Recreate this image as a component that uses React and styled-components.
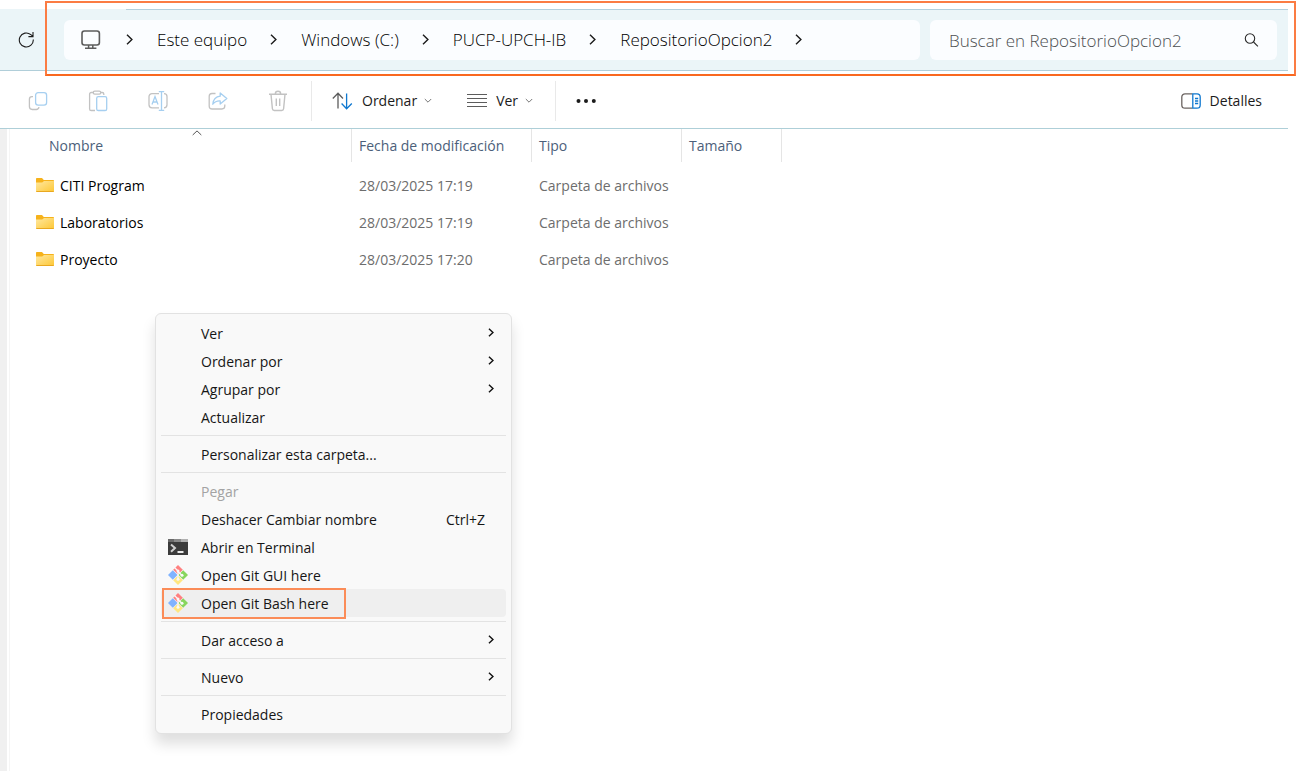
import React from "react";
import styled, { createGlobalStyle } from "styled-components";

const GlobalStyle = createGlobalStyle`
  *, *::before, *::after { box-sizing: border-box; }
  body {
    margin: 0;
    background: #fff;
    color: #1b1b1b;
    font-family: "Open Sans", "Noto Sans", sans-serif;
    font-size: 14px;
    line-height: 20px;
  }
  button, input { font: inherit; color: inherit; }
  button { border: 0; padding: 0; background: none; }
  ul, ol { list-style: none; margin: 0; padding: 0; }
  svg { display: block; flex: none; }
`;

const Window = styled.div`
  position: relative;
  display: flex;
  flex-direction: column;
  min-height: 100vh;
  padding: 9px 8px 0 0;
`;

const AddressBar = styled.header`
  display: flex;
  align-items: center;
  gap: 10px;
  height: 62px;
  padding: 0 11px 0 18px;
  background: linear-gradient(#b4d0dc, #b4d0dc) 126px 0 / 100% 1px no-repeat #ebf5f8;
  border-bottom: 1px solid #b0ced9;
`;

const RefreshButton = styled.button`
  margin-right: 19px;
`;

const Crumbs = styled.nav`
  flex: 1;
  height: 40px;
  padding: 0 16px;
  border-radius: 6px;
  background: #fbfdff;

  ol {
    display: flex;
    align-items: center;
    height: 100%;
  }
  li {
    display: flex;
    align-items: center;
  }
`;

const CrumbLink = styled.a`
  padding: 1px 23px 0 24px;
  color: #000;
  font-size: 17px;
  font-weight: 300;
  line-height: 24px;
  text-decoration: none;
  white-space: nowrap;
`;

const DeviceLink = styled.a`
  margin-right: 24px;
`;

const SearchBox = styled.label`
  display: flex;
  align-items: center;
  flex: 0 1 347px;
  height: 40px;
  padding: 0 18px 0 19px;
  border-radius: 6px;
  background: #fbfdff;
`;

const SearchInput = styled.input`
  flex: 1;
  min-width: 0;
  padding: 2px 0 0;
  border: 0;
  outline: 0;
  background: transparent;
  font-size: 17px;
  font-weight: 300;
  line-height: 24px;
  &::placeholder { color: #4c4f51; opacity: 1; }
`;

const AddressFrame = styled.div`
  position: absolute;
  top: 1px;
  right: 0;
  left: 45px;
  height: 75px;
  border: 2px solid #fb7c43;
  border-bottom-color: #f9681f;
  pointer-events: none;
`;

const Toolbar = styled.div`
  display: flex;
  align-items: center;
  height: 58px;
  padding: 3px 16px 0 8px;
  border-bottom: 1px solid #aecfd8;
`;

const IconButton = styled.button`
  display: flex;
  align-items: center;
  justify-content: center;
  width: 60px;
  height: 40px;
`;

const TextButton = styled.button`
  display: flex;
  align-items: center;
  gap: 7px;
  height: 40px;
  padding: 0 10px;
  margin-left: ${(p) => p.$space || 0}px;

  svg:first-child { margin-right: 2px; }
`;

const Divider = styled.span`
  width: 1px;
  height: 40px;
  margin-left: ${(p) => p.$space}px;
  background: #e9e9e9;
`;

const Spacer = styled.span`
  flex: 1;
`;

const Content = styled.main`
  position: relative;
  display: flex;
  flex: 1;
`;

const PaneEdge = styled.div`
  width: 10px;
  border-left: 7px solid #f0f0f0;
  border-right: 1px solid #f5f5f5;
`;

const FileTable = styled.table`
  align-self: flex-start;
  width: 772px;
  border-collapse: separate;
  border-spacing: 0;
  table-layout: fixed;

  tbody::before {
    content: "";
    display: block;
    height: 5px;
  }
`;

const HeadCell = styled.th`
  position: relative;
  width: ${(p) => p.$width}px;
  height: 33px;
  padding: 0 7px;
  padding-left: ${(p) => (p.$first ? 39 : 7)}px;
  border-right: 1px solid #e5e5e5;
  color: #4c607a;
  font-weight: 400;
  text-align: left;

  svg {
    position: absolute;
    top: 1px;
    right: 149px;
  }
`;

const Cell = styled.td`
  height: 37px;
  padding: 0 7px;
  color: #6d6d6d;
  white-space: nowrap;
`;

const NameCell = styled(Cell)`
  padding-left: 26px;
  color: #000;

  div {
    display: flex;
    align-items: center;
    gap: 6px;
  }
`;

const Menu = styled.ul`
  position: absolute;
  top: 184px;
  left: 155px;
  width: 357px;
  padding: 5px;
  border: 1px solid #e2e2e2;
  border-radius: 6px;
  background: #f9f9f9;
  box-shadow: 0 10px 14px rgba(0, 0, 0, 0.13);
`;

const MenuSeparator = styled.li`
  height: 1px;
  margin: 4px 0;
  background: #e3e3e3;
`;

const MenuButton = styled.button`
  position: relative;
  display: grid;
  grid-template-columns: 20px 1fr auto;
  align-items: center;
  column-gap: 13px;
  width: 100%;
  height: 28px;
  padding: 0 12px 0 7px;
  border-radius: 4px;
  background: ${(p) => (p.$hover ? "#efefef" : "transparent")};
  color: ${(p) => (p.disabled ? "#a3a3a3" : "#161616")};
  text-align: left;

  > svg { margin-bottom: 2px; }
`;

const MenuLabel = styled.span`
  padding-top: 2px;
`;

const Shortcut = styled(MenuLabel)`
  margin-right: 9px;
`;

const ItemFrame = styled.span`
  position: absolute;
  top: -1px;
  left: 1px;
  width: 184px;
  height: 31px;
  border: 2px solid #fb8c58;
`;

const Chevron = ({ size = 11, color = "#1b1b1b", width = 1.4 }) => (
  <svg width={size === 11 ? 7 : 6} height={size} viewBox="0 0 7 11" fill="none" stroke={color} strokeWidth={width}>
    <path d="M1 .8 5.9 5.5 1 10.2" />
  </svg>
);

const ChevronDown = () => (
  <svg width="8" height="6" viewBox="0 0 8 6" fill="none" stroke="#777">
    <path d="M.8 1 4 4.2 7.2 1" />
  </svg>
);

const RefreshIcon = () => (
  <svg width="17" height="17" viewBox="0 0 17 17" fill="none" stroke="#1b1b1b" strokeWidth="1.1">
    <path d="M15.3 8.5A7 7 0 1 1 12.8 3.600L15 5.400M15 1v4.600h-4.600" />
  </svg>
);

const MonitorIcon = () => (
  <svg width="22" height="20" viewBox="0 0 22 20" fill="none" stroke="#5c5c5c" strokeWidth="1.6">
    <rect x="2" y="1" width="17.4" height="14" rx="2.4" />
    <path d="M8.6 15v3M12.8 15v3M5 18.200h11.4" strokeWidth="1.5" />
  </svg>
);

const SearchIcon = () => (
  <svg width="15" height="15" viewBox="0 0 15 15" fill="none" stroke="#2a2a2a" strokeWidth="1.1">
    <circle cx="6" cy="6.500" r="4.700" />
    <path d="m9.500 10 4.400 4.400" />
  </svg>
);

const GRAY = "#c2c2c2";
const BLUE = "#a6cff0";

const CopyIcon = () => (
  <svg width="20" height="20" viewBox="0 0 20 20" fill="none" strokeWidth="1.3">
    <path d="M5 5.6H4A2.6 2.6 0 0 0 1.4 8.200v7.400A2.900 2.900 0 0 0 4.300 18.500h4A2.800 2.800 0 0 0 11 16.200" stroke={GRAY} />
    <rect x="7.600" y="1.600" width="11" height="12.600" rx="2.600" stroke={BLUE} />
  </svg>
);

const PasteIcon = () => (
  <svg width="20" height="22" viewBox="0 0 20 22" fill="none" strokeWidth="1.3">
    <path d="M5.500 2.500H3.200A1.600 1.600 0 0 0 1.600 4.100v14.800a1.600 1.600 0 0 0 1.600 1.600H7M12.500 2.500h1.700A1.600 1.600 0 0 1 15.800 4.100V5" stroke={GRAY} />
    <rect x="5.300" y="1.200" width="7.400" height="3" rx="1.400" stroke={GRAY} />
    <rect x="8.700" y="6.700" width="10" height="13.800" rx="1.600" stroke={BLUE} />
  </svg>
);

const RenameIcon = () => (
  <svg width="20" height="20" viewBox="0 0 20 20" fill="none" strokeWidth="1.3">
    <path d="M11 2.600H4A3 3 0 0 0 1 5.600v8.200a3 3 0 0 0 3 3h7M16 2.600a3 3 0 0 1 3 3v8.200a3 3 0 0 1-3 3" stroke={GRAY} />
    <path d="M13.500 .700v18.600M10.800 .700h5.400M10.800 19.300h5.400M4 13.500 7 5.600l3 7.900M5.100 11h3.900" stroke={BLUE} />
  </svg>
);

const ShareIcon = () => (
  <svg width="20" height="20" viewBox="0 0 20 20" fill="none" strokeWidth="1.3" strokeLinejoin="round">
    <path d="M7.500 2.500H4A2.900 2.900 0 0 0 1.200 5.400v9.800A2.900 2.900 0 0 0 4.100 18h9.800a2.900 2.900 0 0 0 2.900-2.900v-1.600" stroke={GRAY} />
    <path d="M12.200 2 18.800 7.600 12.200 13V9.900C8.800 9.700 6.600 10.800 4.800 13.200 5.300 8.600 7.800 5.600 12.200 5.200Z" stroke={BLUE} />
  </svg>
);

const TrashIcon = () => (
  <svg width="20" height="22" viewBox="0 0 20 22" fill="none" stroke={GRAY} strokeWidth="1.400">
    <path d="M1 4.200h18M3 4.200l1.400 14.600a1.900 1.900 0 0 0 1.900 1.700h7.400a1.900 1.900 0 0 0 1.900-1.700L17 4.200M7.300 4A2.700 2.700 0 0 1 12.700 4M8.300 8.500v7.600M11.700 8.500v7.600" />
  </svg>
);

const SortIcon = () => (
  <svg width="21" height="18" viewBox="0 0 21 18" fill="none" strokeWidth="1.300">
    <path d="M6 16.500V1.500M.8 6.500 6 1.300l5 5.200" stroke="#5c5c5c" />
    <path d="M14.600 1.500v15M9.600 11.500l5 5.200 5.200-5.200" stroke="#0f78d0" />
  </svg>
);

const LinesIcon = () => (
  <svg width="20" height="16" viewBox="0 0 20 16" stroke="#5c5c5c" strokeWidth="1">
    <path d="M0 1.500h20M0 5.500h20M0 9.500h20M0 13.500h20" />
  </svg>
);

const DotsIcon = () => (
  <svg width="20" height="6" viewBox="0 0 20 6" fill="#1b1b1b">
    <circle cx="2.500" cy="3" r="2" />
    <circle cx="10" cy="3" r="2" />
    <circle cx="17.800" cy="3" r="2" />
  </svg>
);

const DetailsIcon = () => (
  <svg width="20" height="16" viewBox="0 0 20 16" fill="none" strokeWidth="1.300">
    <path d="M11.500 .8H4A3.200 3.200 0 0 0 .8 4v8A3.200 3.200 0 0 0 4 15.200h7.500" stroke="#6c6562" />
    <path d="M11.800 .8H16A3.200 3.200 0 0 1 19.200 4v8a3.200 3.200 0 0 1-3.200 3.200h-4.200ZM14 5.500h3.200M14 8h3.200M14 10.500h3.200" stroke="#0f78d0" />
  </svg>
);

const SortMark = () => (
  <svg width="10" height="6" viewBox="0 0 10 6" fill="none" stroke="#555">
    <path d="M.7 5 5 .9 9.300 5" />
  </svg>
);

const FolderIcon = () => (
  <svg width="18" height="16" viewBox="0 0 18 16">
    <defs>
      <linearGradient id="folder" x1="0" y1="0" x2="1" y2="1">
        <stop offset="0" stopColor="#ffe8a0" />
        <stop offset="1" stopColor="#fdc735" />
      </linearGradient>
    </defs>
    <path d="M0 .8Q0 0 .8 0H6l1.800 2H17.200Q18 2 18 2.800V6H0Z" fill="#f6b21b" />
    <path d="M0 4.500H6.200L8 3H18V13.300Q18 14 17.200 14H.8Q0 14 0 13.300Z" fill="url(#folder)" />
    <path d="M.3 13.500h17.400" stroke="#e9a820" />
  </svg>
);

const TerminalIcon = () => (
  <svg width="20" height="16" viewBox="0 0 20 16">
    <rect width="20" height="16" fill="#3b3b3b" />
    <rect width="6" height="3" fill="#6a6a6a" />
    <rect x="6" width="7" height="3" fill="#8a8a8a" />
    <rect x="13" width="7" height="3" fill="#b0b0b0" />
    <path d="m3 5.500 4 3.600-4 3.600" fill="none" stroke="#d0d0d0" strokeWidth="2" />
    <path d="M9.500 13h6" stroke="#fff" strokeWidth="1.800" />
  </svg>
);

const GitIcon = () => (
  <svg width="20" height="20" viewBox="0 0 20 20">
    <path d="M10 0 14.800 4.800 10 9.600 5.200 4.800Z" fill="#ff8080" />
    <path d="M4.800 5.200 9.600 10 4.800 14.800 0 10Z" fill="#80b3ff" />
    <path d="M15.200 5.200 20 10 15.200 14.800 10.400 10Z" fill="#87d65c" />
    <path d="M10 10.400 14.800 15.200 10 20 5.200 15.200Z" fill="#ffe680" />
    <path d="M6.500 2.500 10 6v8.500M10 6.500l4 4" fill="none" stroke="#f9f9f9" strokeWidth="1.300" />
    <g fill="#f9f9f9">
      <circle cx="10" cy="6" r="1.500" />
      <circle cx="10" cy="14.200" r="1.500" />
      <circle cx="14" cy="10.200" r="1.500" />
    </g>
  </svg>
);

const crumbs = ["Este equipo", "Windows (C:)", "PUCP-UPCH-IB", "RepositorioOpcion2"];

const tools = [
  ["Copiar", CopyIcon],
  ["Pegar", PasteIcon],
  ["Cambiar nombre", RenameIcon],
  ["Compartir", ShareIcon],
  ["Eliminar", TrashIcon],
];

const files = [
  ["CITI Program", "28/03/2025 17:19"],
  ["Laboratorios", "28/03/2025 17:19"],
  ["Proyecto", "28/03/2025 17:20"],
];

const menuItems = [
  { label: "Ver", submenu: true },
  { label: "Ordenar por", submenu: true },
  { label: "Agrupar por", submenu: true },
  { label: "Actualizar" },
  null,
  { label: "Personalizar esta carpeta..." },
  null,
  { label: "Pegar", disabled: true },
  { label: "Deshacer Cambiar nombre", shortcut: "Ctrl+Z" },
  { label: "Abrir en Terminal", icon: <TerminalIcon /> },
  { label: "Open Git GUI here", icon: <GitIcon /> },
  { label: "Open Git Bash here", icon: <GitIcon />, marked: true },
  null,
  { label: "Dar acceso a", submenu: true },
  null,
  { label: "Nuevo", submenu: true },
  null,
  { label: "Propiedades" },
];

function ContextMenu() {
  return (
    <Menu>
      {menuItems.map((item, i) =>
        item === null ? (
          <MenuSeparator key={i} />
        ) : (
          <li key={i}>
            <MenuButton type="button" disabled={item.disabled} $hover={item.marked}>
              <span>{item.icon}</span>
              <MenuLabel>{item.label}</MenuLabel>
              {item.submenu && <Chevron size={9} color="#111" width={1.7} />}
              {item.shortcut && <Shortcut>{item.shortcut}</Shortcut>}
              {item.marked && <ItemFrame />}
            </MenuButton>
          </li>
        )
      )}
    </Menu>
  );
}

export default function App() {
  return (
    <Window>
      <GlobalStyle />
      <AddressBar>
        <RefreshButton type="button" aria-label="Actualizar">
          <RefreshIcon />
        </RefreshButton>
        <Crumbs aria-label="Ruta">
          <ol>
            <li>
              <DeviceLink href="#" aria-label="Equipo">
                <MonitorIcon />
              </DeviceLink>
              <Chevron />
            </li>
            {crumbs.map((name) => (
              <li key={name}>
                <CrumbLink href="#">{name}</CrumbLink>
                <Chevron />
              </li>
            ))}
          </ol>
        </Crumbs>
        <SearchBox>
          <SearchInput type="text" aria-label="Buscar" placeholder="Buscar en RepositorioOpcion2" />
          <SearchIcon />
        </SearchBox>
      </AddressBar>
      <AddressFrame />
      <Toolbar>
        {tools.map(([name, Icon]) => (
          <IconButton key={name} type="button" aria-label={name} disabled>
            <Icon />
          </IconButton>
        ))}
        <Divider $space={3} />
        <TextButton type="button" $space={10}>
          <SortIcon />
          Ordenar
          <ChevronDown />
        </TextButton>
        <TextButton type="button" $space={15}>
          <LinesIcon />
          Ver
          <ChevronDown />
        </TextButton>
        <Divider $space={12} />
        <IconButton type="button" aria-label="Más opciones">
          <DotsIcon />
        </IconButton>
        <Spacer />
        <TextButton type="button">
          <DetailsIcon />
          Detalles
        </TextButton>
      </Toolbar>
      <Content>
        <PaneEdge />
        <FileTable>
          <thead>
            <tr>
              <HeadCell $width={342} $first>
                Nombre
                <SortMark />
              </HeadCell>
              <HeadCell $width={180}>Fecha de modificación</HeadCell>
              <HeadCell $width={150}>Tipo</HeadCell>
              <HeadCell $width={100}>Tamaño</HeadCell>
            </tr>
          </thead>
          <tbody>
            {files.map(([name, date]) => (
              <tr key={name}>
                <NameCell>
                  <div>
                    <FolderIcon />
                    {name}
                  </div>
                </NameCell>
                <Cell>{date}</Cell>
                <Cell>Carpeta de archivos</Cell>
                <Cell />
              </tr>
            ))}
          </tbody>
        </FileTable>
        <ContextMenu />
      </Content>
    </Window>
  );
}
